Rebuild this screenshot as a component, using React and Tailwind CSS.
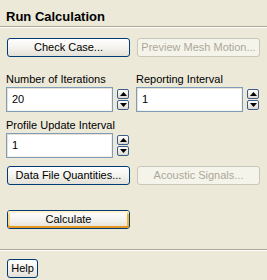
import React from 'react';

function XpButton({ label, disabled, isDefault, className = '' }) {
  if (disabled) {
    return (
      <div className={`h-[19px] flex items-center justify-center whitespace-nowrap rounded-[3px] border border-[#C9C7BA] bg-[#F5F4EA] text-[#ACA899] ${className}`}>
        {label}
      </div>
    );
  }
  return (
    <div className={`h-[19px] rounded-[3px] border border-[#003C74] bg-gradient-to-b from-white via-[#F4F3EE] to-[#E3E1D7] ${className}`}>
      <div
        className={`h-full flex items-center justify-center whitespace-nowrap rounded-[2px] text-black ${
          isDefault ? 'shadow-[inset_0_2px_0_#FFF0CF,inset_0_-2px_0_#E5971F,inset_2px_0_0_#FBD88C,inset_-2px_0_0_#F8B330]' : ''
        }`}
      >
        {label}
      </div>
    </div>
  );
}

function Spinner() {
  const arrow = (up) => (
    <div className="w-[12px] h-[10px] rounded-[2px] border border-[#3C5C8C] bg-gradient-to-b from-white to-[#DCDAD0] flex items-center justify-center">
      <svg width="7" height="4" viewBox="0 0 7 4">
        {up ? <polygon points="3.5,0 7,4 0,4" fill="#000" /> : <polygon points="0,0 7,0 3.5,4" fill="#000" />}
      </svg>
    </div>
  );
  return (
    <div className="flex flex-col gap-[1px] pt-[2px]">
      {arrow(true)}
      {arrow(false)}
    </div>
  );
}

function NumberField({ label, value }) {
  return (
    <div className="flex flex-col">
      <div className="leading-[14px] h-[14px] whitespace-nowrap">{label}</div>
      <div className="flex gap-[4px] mt-[1px]">
        <div className="w-[107px] h-[25px] border border-[#7F9DB9] bg-white shadow-[inset_1px_1px_0_#E6E3D6,inset_-1px_-1px_0_#F2F0E8] flex items-center pl-[5px]">
          {value}
        </div>
        <Spinner />
      </div>
    </div>
  );
}

export default function App() {
  return (
    <div
      className="w-[267px] h-[280px] bg-[#ECE9D8] flex flex-col text-[11px] text-black overflow-hidden"
      style={{ fontFamily: '"Liberation Sans", Arial, sans-serif' }}
    >
      <div className="px-[6px] pt-[9px] pb-[2px] text-[13px] font-bold leading-[15px] border-b border-[#ACA899] shadow-[0_1px_0_#FFFFFF]">
        Run Calculation
      </div>

      <div className="flex flex-col px-[7px] flex-1">
        <div className="flex gap-[7px] mt-[11px]">
          <XpButton label="Check Case..." className="w-[123px]" />
          <XpButton label="Preview Mesh Motion..." disabled className="w-[123px]" />
        </div>

        <div className="flex gap-[7px] mt-[15px] -ml-[1px]">
          <NumberField label="Number of Iterations" value="20" />
          <NumberField label="Reporting Interval" value="1" />
        </div>

        <div className="mt-[6px] -ml-[1px]">
          <NumberField label="Profile Update Interval" value="1" />
        </div>

        <div className="flex gap-[7px] mt-[8px]">
          <XpButton label="Data File Quantities..." className="w-[123px]" />
          <XpButton label="Acoustic Signals..." disabled className="w-[123px]" />
        </div>

        <div className="mt-[25px]">
          <XpButton label="Calculate" isDefault className="w-[123px]" />
        </div>
      </div>

      <div className="border-t border-[#ACA899] shadow-[inset_0_1px_0_#FFFFFF] px-[7px] pt-[9px] pb-[2px]">
        <XpButton label="Help" className="w-[31px]" />
      </div>
    </div>
  );
}
